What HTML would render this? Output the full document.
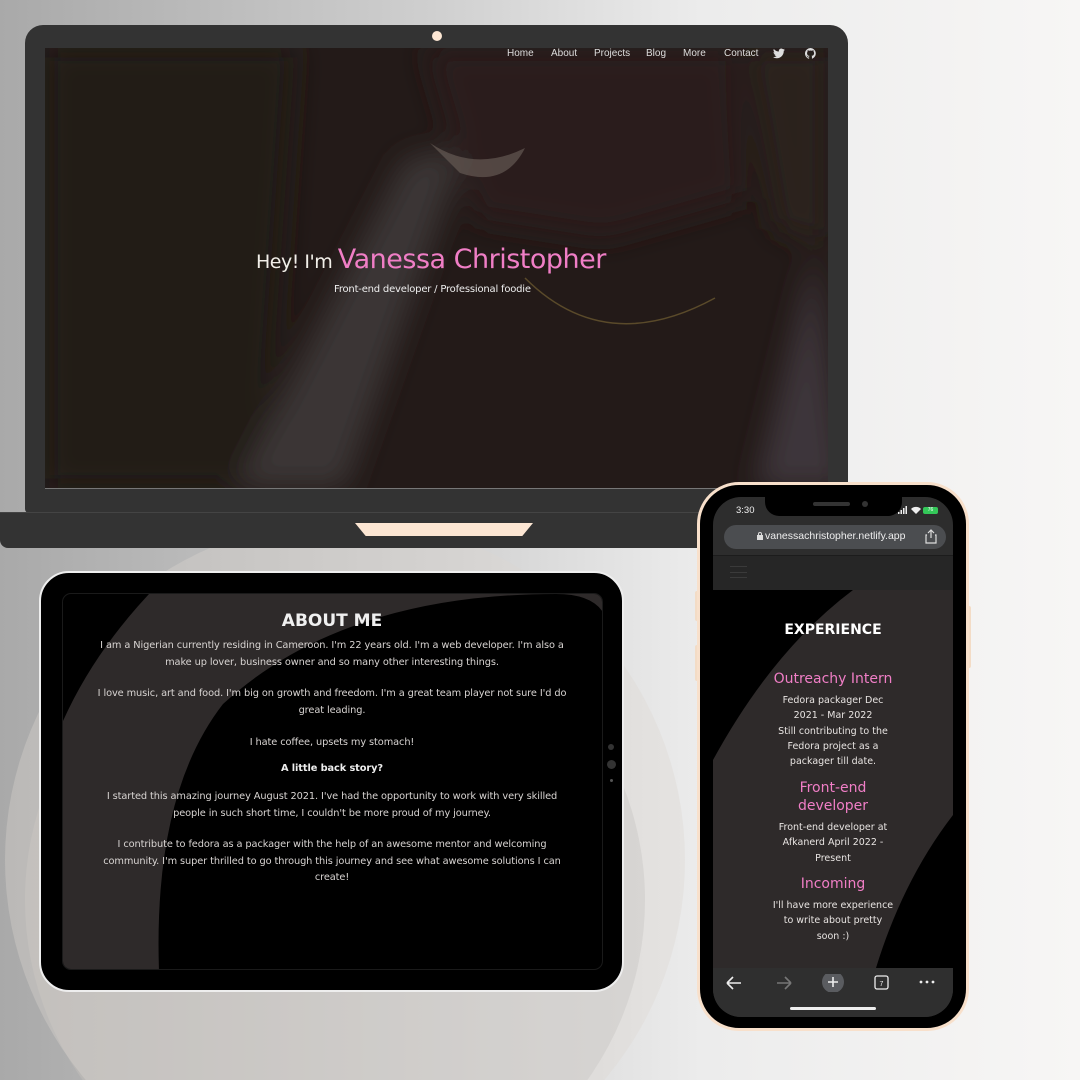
<!DOCTYPE html>
<html style="width:1080px;height:1080px;overflow:hidden"><head><meta charset="utf-8"><style>
*{margin:0;padding:0;box-sizing:border-box}
body{width:1080px;height:1080px;overflow:hidden;position:relative;font-family:"Liberation Sans","DejaVu Sans",sans-serif;background:linear-gradient(90deg,#a9a9a9 0%,#cfcfcf 40%,#ececec 65%,#f7f6f5 100%)}
.abs{position:absolute}
.nav a{position:absolute;top:48px;font-size:10px;color:#ddd;text-decoration:none;font-family:"Liberation Sans Narrow","Liberation Sans",sans-serif}
.tab p{color:#d8d4d2;font-family:"DejaVu Sans",sans-serif;font-size:9.8px;text-align:center;line-height:16.5px;position:absolute;left:62px;width:540px;letter-spacing:-0.1px}
.ph{position:absolute;left:713px;width:240px;text-align:center;font-family:"DejaVu Sans",sans-serif}
.ph.h{color:#f07ec6;font-size:14px;line-height:18px}
.ph.t{color:#e8e4e2;font-size:9.5px;line-height:15.3px}
</style></head><body>
<div class="abs" style="left:0;top:0;width:1080px;height:1080px;overflow:hidden">
<div class="abs" style="left:25px;top:590px;width:620px;height:620px;border-radius:50%;background:linear-gradient(90deg,#b6b4b2,#d4d4d4)"></div>
<div class="abs" style="left:5px;top:520px;width:680px;height:680px;border-radius:50%;background:rgba(220,215,210,0.35)"></div>
</div>

<!-- laptop -->
<div class="abs" style="left:25px;top:25px;width:823px;height:488px;background:#333;border-radius:18px 18px 4px 4px"></div>
<div class="abs" style="left:432px;top:31px;width:10px;height:10px;border-radius:50%;background:#fce6d3"></div>
<div class="abs" style="left:45px;top:48px;width:783px;height:440px;overflow:hidden;background:#231a18">
 <svg width="783" height="440" style="position:absolute;left:0;top:0">
  <defs><filter id="b"><feGaussianBlur stdDeviation="14"/></filter></defs>
  <g filter="url(#b)">
   <path d="M0 0H250L220 440H0Z" fill="#211a18"/>
   <path d="M360 110 L420 100 L300 440 L190 440 Z" fill="#3a3436"/>
   <path d="M380 0 L690 0 L700 150 L560 190 L430 170 Z" fill="#2a1e1b"/>
   <path d="M770 200 L800 440 L710 440 Z" fill="#3c363b"/>
   <path d="M700 0H783V200L730 180Z" fill="#2a221f"/>
  </g>
  <path d="M385 95 Q430 125 480 100 Q460 140 415 125Z" fill="#6e625c" opacity="0.6"/>
  <path d="M480 230 Q560 310 670 250" stroke="#5a4a2a" stroke-width="1.5" fill="none"/>
 </svg>
</div>
<div class="nav">
 <a style="left:507px">Home</a><a style="left:551px">About</a><a style="left:594px">Projects</a><a style="left:646px">Blog</a><a style="left:683px">More</a><a style="left:724px">Contact</a>
</div>
<svg class="abs" style="left:773px;top:48px" width="12" height="11" viewBox="0 0 24 20"><path d="M24 2.4a10 10 0 0 1-2.8.8A5 5 0 0 0 23.3.4a10 10 0 0 1-3.1 1.2A4.9 4.9 0 0 0 11.8 6 14 14 0 0 1 1.7.9a4.9 4.9 0 0 0 1.5 6.6A4.9 4.9 0 0 1 1 6.9a4.9 4.9 0 0 0 3.9 4.8 4.9 4.9 0 0 1-2.2.1 4.9 4.9 0 0 0 4.6 3.4A9.9 9.9 0 0 1 0 17.2 14 14 0 0 0 7.5 19.4c9 0 14-7.5 14-14v-.6A10 10 0 0 0 24 2.4z" fill="#ddd"/></svg>
<svg class="abs" style="left:805px;top:48px" width="11" height="11" viewBox="0 0 16 16"><path d="M8 0a8 8 0 0 0-2.5 15.6c.4 0 .5-.2.5-.4v-1.5c-2.2.5-2.7-1-2.7-1-.4-.9-.9-1.2-.9-1.2-.7-.5.1-.5.1-.5.8.1 1.2.8 1.2.8.7 1.3 1.9.9 2.4.7 0-.5.3-.9.5-1.1-1.8-.2-3.6-.9-3.6-4 0-.9.3-1.6.8-2.1-.1-.2-.4-1 .1-2.1 0 0 .7-.2 2.2.8a7.5 7.5 0 0 1 4 0c1.5-1 2.2-.8 2.2-.8.4 1.1.2 1.9.1 2.1.5.6.8 1.3.8 2.1 0 3.1-1.9 3.7-3.6 3.9.3.3.5.8.5 1.5v2.2c0 .2.1.5.6.4A8 8 0 0 0 8 0z" fill="#ddd"/></svg>
<div class="abs" style="left:256px;top:244px;white-space:nowrap;font-family:'DejaVu Sans',sans-serif">
 <span style="font-size:19px;color:#f2efe9;letter-spacing:-0.5px">Hey! I'm </span><span style="font-size:27px;color:#f07ec6;letter-spacing:-0.5px">Vanessa Christopher</span>
</div>
<div class="abs" style="left:334px;top:284px;font-size:10px;color:#eee;font-family:'DejaVu Sans',sans-serif;white-space:nowrap;letter-spacing:-0.2px">Front-end developer / Professional foodie</div>
<div class="abs" style="left:45px;top:488px;width:783px;height:1px;background:#777"></div>
<div class="abs" style="left:0;top:512px;width:848px;height:36px;background:#333;border-radius:0 0 8px 8px;border-top:1px solid #444"></div>
<div class="abs" style="left:355px;top:523px;width:178px;height:13px;background:#fce6d3;clip-path:polygon(0 0,100% 0,94% 100%,6% 100%)"></div>

<!-- tablet -->
<div class="abs" style="left:39px;top:571px;width:585px;height:421px;border-radius:30px;background:#000;border:2px solid #eee"></div>
<div class="abs" style="left:62px;top:593px;width:541px;height:377px;border-radius:9px;overflow:hidden;background:#000;border:1px solid #1a1a1a">
 <svg width="541" height="377" style="position:absolute;left:0;top:0">
  <path d="M86 0 Q30 60 0 127 L0 377 L96 377 Q90 200 160 110 Q280 0 493 0 Z" fill="#2e2a2a"/>
  <path d="M493 0 Q530 0 541 20 L541 0Z" fill="#2e2a2a"/>
 </svg>
</div>
<div class="tab">
 <div class="abs" style="left:62px;width:540px;top:611px;text-align:center;color:#f0f0f0;font-size:17px;font-weight:bold;font-family:'DejaVu Sans',sans-serif">ABOUT ME</div>
 <p style="top:638px">I am a Nigerian currently residing in Cameroon. I'm 22 years old. I'm a web developer. I'm also a<br>make up lover, business owner and so many other interesting things.</p>
 <p style="top:686px">I love music, art and food. I'm big on growth and freedom. I'm a great team player not sure I'd do<br>great leading.</p>
 <p style="top:735px">I hate coffee, upsets my stomach!</p>
 <p style="top:761px;font-weight:bold;color:#eee">A little back story?</p>
 <p style="top:789px">I started this amazing journey August 2021. I've had the opportunity to work with very skilled<br>people in such short time, I couldn't be more proud of my journey.</p>
 <p style="top:837px">I contribute to fedora as a packager with the help of an awesome mentor and welcoming<br>community. I'm super thrilled to go through this journey and see what awesome solutions I can<br>create!</p>
</div>
<div class="abs" style="left:608px;top:744px;width:6px;height:6px;border-radius:50%;background:#333"></div>
<div class="abs" style="left:607px;top:760px;width:9px;height:9px;border-radius:50%;background:#333"></div>
<div class="abs" style="left:610px;top:779px;width:3px;height:3px;border-radius:50%;background:#555"></div>

<!-- phone -->
<div class="abs" style="left:695px;top:591px;width:4px;height:30px;background:#f3dcc6;border-radius:2px"></div>
<div class="abs" style="left:695px;top:645px;width:4px;height:36px;background:#f3dcc6;border-radius:2px"></div>
<div class="abs" style="left:967px;top:606px;width:4px;height:62px;background:#f3dcc6;border-radius:2px"></div>
<div class="abs" style="left:697px;top:482px;width:272px;height:549px;border-radius:42px;background:#000;border:3px solid #f8e0cb"></div>
<div class="abs" style="left:713px;top:497px;width:240px;height:520px;border-radius:28px;overflow:hidden;background:#2d2d2d">
 <div class="abs" style="left:0;top:58px;width:240px;height:35px;background:#262626;border-top:1px solid #1c1c1c"></div>
 <div class="abs" style="left:0;top:93px;width:240px;height:378px;background:#000">
  <svg width="240" height="378" style="position:absolute;left:0;top:0"><path d="M140 0 Q60 60 0 170 L0 378 L163 378 Q190 290 240 225 L240 0Z" fill="#2e2a2a"/></svg>
 </div>
 <div class="abs" style="left:0;top:471px;width:240px;height:49px;background:#2f2f2f"></div>
</div>
<div class="abs" style="left:765px;top:497px;width:137px;height:19px;background:#000;border-radius:0 0 14px 14px"></div>
<div class="abs" style="left:813px;top:502px;width:37px;height:4px;background:#333;border-radius:2px"></div>
<div class="abs" style="left:862px;top:501px;width:6px;height:6px;background:#333;border-radius:50%"></div>
<div class="abs" style="left:736px;top:505px;font-size:9.5px;color:#eee">3:30</div>
<svg class="abs" style="left:898px;top:506px" width="10" height="8"><rect x="0" y="6" width="1.5" height="2" fill="#eee"/><rect x="2.5" y="4" width="1.5" height="4" fill="#eee"/><rect x="5" y="2" width="1.5" height="6" fill="#eee"/><rect x="7.5" y="0" width="1.5" height="8" fill="#eee"/></svg>
<svg class="abs" style="left:911px;top:506px" width="10" height="8" viewBox="0 0 10 8"><path d="M0 3a7 7 0 0 1 10 0L5 8Z" fill="#eee"/></svg>
<div class="abs" style="left:923px;top:507px;width:15px;height:7px;background:#34c759;border-radius:2px;font-size:5px;color:#fff;text-align:center;line-height:7px">76</div>
<div class="abs" style="left:724px;top:525px;width:222px;height:24px;border-radius:12px;background:#4b4d50"></div>
<svg class="abs" style="left:757px;top:532px" width="6" height="8"><rect x="0" y="3" width="6" height="5" fill="#ddd"/><path d="M1.5 3.5V2a1.5 1.5 0 0 1 3 0v1.5" stroke="#ddd" fill="none"/></svg>
<div class="abs" style="left:765px;top:530px;font-size:10.5px;color:#eee;white-space:nowrap">vanessachristopher.netlify.app</div>
<svg class="abs" style="left:925px;top:529px" width="12" height="15" viewBox="0 0 12 15"><path d="M6 1v8M3 4l3-3 3 3M2 6H1v8h10V6h-1" stroke="#ddd" fill="none" stroke-width="1.2"/></svg>
<div class="abs" style="left:730px;top:566px;width:17px;height:12px;border-top:1px solid #3a3a3a;border-bottom:1px solid #3a3a3a"></div>
<div class="abs" style="left:730px;top:572px;width:17px;height:1px;background:#3a3a3a"></div>
<div class="ph" style="top:622px;color:#fff;font-weight:bold;font-size:14px">EXPERIENCE</div>
<div class="ph h" style="top:670px">Outreachy Intern</div>
<div class="ph t" style="top:693px">Fedora packager Dec<br>2021 - Mar 2022<br>Still contributing to the<br>Fedora project as a<br>packager till date.</div>
<div class="ph h" style="top:779px">Front-end<br>developer</div>
<div class="ph t" style="top:820px">Front-end developer at<br>Afkanerd April 2022 -<br>Present</div>
<div class="ph h" style="top:875px">Incoming</div>
<div class="ph t" style="top:898px">I'll have more experience<br>to write about pretty<br>soon :)</div>
<svg class="abs" style="left:724px;top:974px" width="220" height="18" viewBox="0 0 220 18">
 <path d="M3 9h14M3 9l6-6M3 9l6 6" stroke="#eee" stroke-width="1.6" fill="none"/>
 <path d="M67 9h-14M67 9l-6-6M67 9l-6 6" stroke="#777" stroke-width="1.6" fill="none"/>
 <circle cx="109" cy="8" r="11" fill="#5a5c60"/>
 <path d="M109 3v10M104 8h10" stroke="#eee" stroke-width="1.6"/>
 <rect x="151" y="2" width="13" height="13" rx="2" stroke="#eee" stroke-width="1.3" fill="none"/>
 <text x="157.5" y="12" font-size="7" fill="#eee" text-anchor="middle" font-family="Liberation Sans">7</text>
 <circle cx="197" cy="8" r="1.4" fill="#eee"/><circle cx="203" cy="8" r="1.4" fill="#eee"/><circle cx="209" cy="8" r="1.4" fill="#eee"/>
</svg>
<div class="abs" style="left:790px;top:1007px;width:86px;height:3px;border-radius:2px;background:#eee"></div>
</body></html>
